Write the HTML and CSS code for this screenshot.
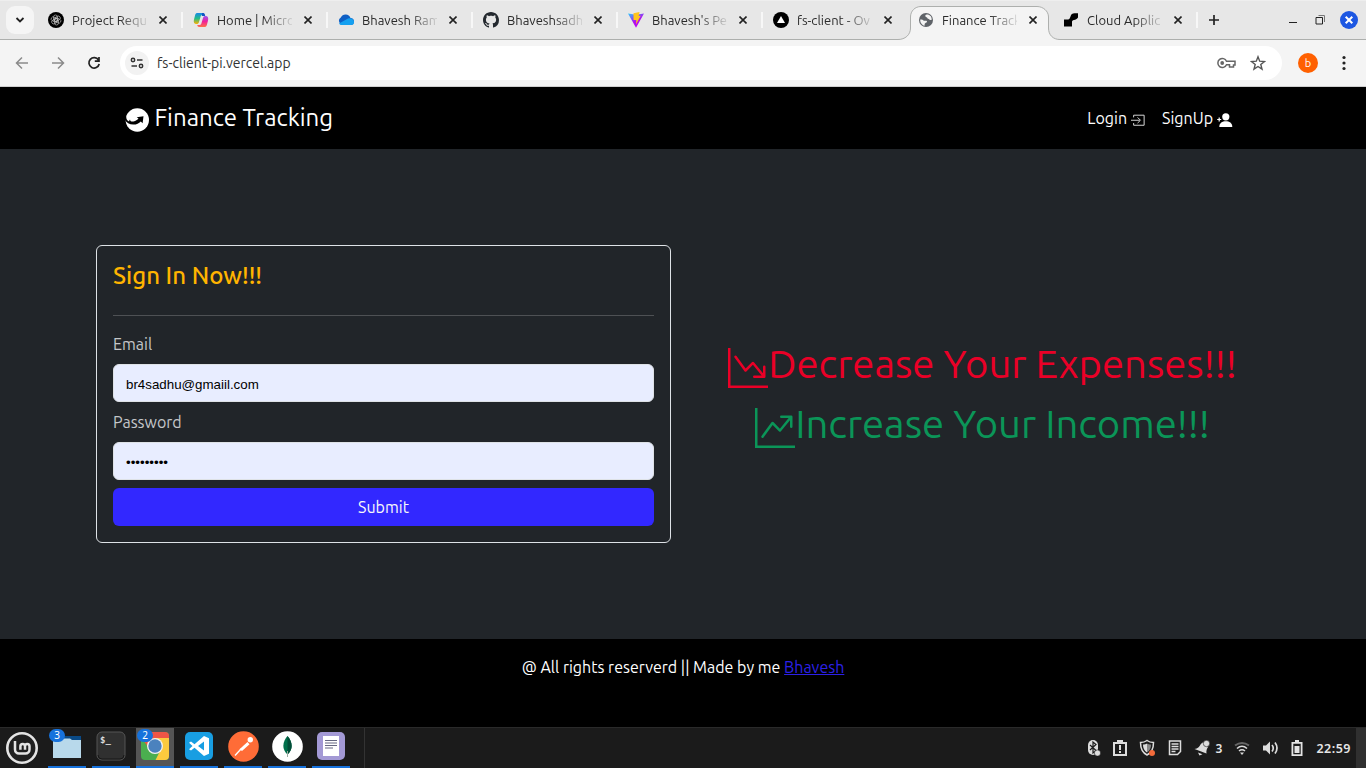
FILE: index.html
```html
<!DOCTYPE html>
<html lang="en">
<head>
<meta charset="utf-8">
<title>Finance Tracking</title>
<link rel="stylesheet" href="styles.css">
</head>
<body>
<div class="screen">
  <div class="tabstrip">
    <button class="tab-search"><svg width="10" height="10" viewBox="0 0 10 10"><path d="M1.500 3l3.500 3.500L8.500 3" fill="none" stroke="#222" stroke-width="1.800"/></svg></button>
    <div class="tabs">
      <div class="tab">
        <svg class="fav" viewBox="0 0 16 16"><circle cx="8" cy="8" r="8" fill="#000"/><g fill="none" stroke="#ccc" stroke-width=".6"><rect x="5.500" y="3" width="4" height="6.500" rx="2"/><rect x="5.500" y="3" width="4" height="6.500" rx="2" transform="rotate(60 8 8)"/><rect x="5.500" y="3" width="4" height="6.500" rx="2" transform="rotate(120 8 8)"/><rect x="5.500" y="3" width="4" height="6.500" rx="2" transform="rotate(180 8 8)"/><rect x="5.500" y="3" width="4" height="6.500" rx="2" transform="rotate(240 8 8)"/><rect x="5.500" y="3" width="4" height="6.500" rx="2" transform="rotate(300 8 8)"/></g></svg>
        <span class="tab-title">Project Requ</span><svg class="x" viewBox="0 0 8 8"><path d="M.5.5l7 7m0-7l-7 7"/></svg>
      </div>
      <div class="tab">
        <svg class="fav" viewBox="0 0 16 16"><defs><linearGradient id="ca" x1="0" y1="0" x2="0" y2="1"><stop offset="0" stop-color="#1788e8"/><stop offset=".5" stop-color="#25bd86"/><stop offset="1" stop-color="#ffb000"/></linearGradient><linearGradient id="cb" x1="0" y1="0" x2="0" y2="1"><stop offset="0" stop-color="#9b55f0"/><stop offset=".5" stop-color="#f0209a"/><stop offset="1" stop-color="#ff7048"/></linearGradient></defs><path d="M4 1h6c1 0 1.500 1 1.800 2H9.500C8 3 7.700 4 7.200 6L6 10c-.5 1.500-1 2-2.500 2C1 12 .3 10 1 7.500l1-4C2.400 2 2.900 1 4 1z" fill="url(#ca)"/><path d="M12 15H6c-1 0-1.500-1-1.800-2h2.300C8 13 8.300 12 8.800 10L10 6c.5-1.500 1-2 2.500-2C15 4 15.700 6 15 8.500l-1 4c-.4 1.500-.9 2.500-2 2.500z" fill="url(#cb)"/><path d="M9 1h1.500c.8 0 1.500 1.500 1.700 3L9 4z" fill="#1455c4"/></svg>
        <span class="tab-title">Home | Micro</span><svg class="x" viewBox="0 0 8 8"><path d="M.5.5l7 7m0-7l-7 7"/></svg>
      </div>
      <div class="tab">
        <svg class="fav" viewBox="0 0 16 16"><path d="M3.500 12A3.500 3.500 0 0 1 2.800 5.500 5.300 5.300 0 0 1 12.500 6 3.200 3.200 0 0 1 12.500 13H4z" fill="#0f5fc5"/><path d="M1 11.500L10 6.600c3-1.300 6 .6 6 3.300A3.100 3.100 0 0 1 13 13H3.500C2.200 13 1.400 12.300 1 11.500z" fill="#14a0f0"/></svg>
        <span class="tab-title">Bhavesh Ram</span><svg class="x" viewBox="0 0 8 8"><path d="M.5.5l7 7m0-7l-7 7"/></svg>
      </div>
      <div class="tab">
        <svg class="fav" viewBox="0 0 16 16"><path fill="#24292f" d="M8 0C3.580 0 0 3.580 0 8c0 3.540 2.290 6.530 5.470 7.590.4.070.55-.17.55-.38 0-.19-.01-.82-.01-1.490-2.010.37-2.530-.49-2.690-.94-.09-.23-.48-.94-.82-1.130-.28-.15-.68-.52-.01-.53.63-.01 1.080.58 1.230.82.72 1.210 1.870.87 2.330.66.070-.52.280-.87.51-1.070-1.780-.2-3.640-.89-3.640-3.950 0-.87.31-1.590.82-2.150-.08-.2-.36-1.020.08-2.120 0 0 .67-.21 2.200.82.64-.18 1.320-.27 2-.27s1.360.09 2 .27c1.530-1.040 2.200-.82 2.200-.82.44 1.100.16 1.920.08 2.120.51.56.82 1.270.82 2.150 0 3.070-1.870 3.750-3.650 3.950.29.25.54.73.54 1.480 0 1.070-.01 1.930-.01 2.200 0 .21.15.46.55.38A8.010 8.010 0 0 0 16 8c0-4.420-3.580-8-8-8z"/></svg>
        <span class="tab-title">Bhaveshsadh</span><svg class="x" viewBox="0 0 8 8"><path d="M.5.5l7 7m0-7l-7 7"/></svg>
      </div>
      <div class="tab">
        <svg class="fav" viewBox="0 0 16 16"><defs><linearGradient id="v" x1="0" y1="0" x2=".6" y2="1"><stop offset="0" stop-color="#28ceff"/><stop offset=".6" stop-color="#b010f0"/><stop offset="1" stop-color="#c000f0"/></linearGradient></defs><path d="M0 1.500l8 1.300 8-1.300-8 14.300z" fill="url(#v)"/><path d="M5.500 1.200L11.500 0l-.8 4 2-.3L8 12.500l.3-4.500H5.500z" fill="#ffc51d"/></svg>
        <span class="tab-title">Bhavesh's Pe</span><svg class="x" viewBox="0 0 8 8"><path d="M.5.5l7 7m0-7l-7 7"/></svg>
      </div>
      <div class="tab">
        <svg class="fav" viewBox="0 0 16 16"><circle cx="8" cy="8" r="8"/><path d="M8 4l4 7H4z" fill="#fff"/></svg>
        <span class="tab-title">fs-client - Ov</span><svg class="x" viewBox="0 0 8 8"><path d="M.5.5l7 7m0-7l-7 7"/></svg>
      </div>
      <div class="tab active">
        <svg class="shape" width="162" height="34" viewBox="0 0 162 34"><path d="M0 34V33.500C7 33.500 12.500 29 12.500 22V11C12.500 5 17 .5 23 .5h116c6 0 11.500 4.500 11.500 10.500v11c0 7 4.500 11.500 11.500 11.500v.5z" fill="#f4f4f4"/><path d="M0 33.500C7 33.500 12.500 29 12.500 22V11C12.500 5 17 .5 23 .5h116c6 0 11.500 4.500 11.500 10.500v11c0 7 4.500 11.500 11.500 11.500" fill="none" stroke="#adafad"/></svg>
        <svg class="fav" viewBox="0 0 16 16"><circle cx="8" cy="8" r="7" fill="#5f6368"/><path d="M9 2.500c-2 0-1.800 1.300-1.500 2 .4.800 1.700.5 1.800 1.600.1 1 1.500.5 2 1.400.3.600 1.500.6 2.400.2C14 5 12 2.500 9 2.500zM2.200 7.500c1.800 0 3.300.5 3.500 1.300h2.600c1 .3.800 1.200.2 1.800-1 .4-1.800.7-1.900 2v1.100C4 13.300 2 10.500 2.200 7.500z" fill="#f4f4f4"/></svg>
        <span class="tab-title">Finance Track</span><svg class="x" viewBox="0 0 8 8"><path d="M.5.5l7 7m0-7l-7 7"/></svg>
      </div>
      <div class="tab">
        <svg class="fav" viewBox="0 0 16 16"><path d="M1 7.500h4C6.500 7.500 7 6 7.500 4.500 8 2.500 9.500 1.300 11.500 1.300h3.500v4.200c-1 1.800-2.500 2.200-4 2.500-1.500.3-2 .8-2 2v4.500H1z"/></svg>
        <span class="tab-title">Cloud Applic</span><svg class="x" viewBox="0 0 8 8"><path d="M.5.5l7 7m0-7l-7 7"/></svg>
      </div>
    </div>
    <svg class="plus" width="12" height="12" viewBox="0 0 12 12"><path d="M6 1v10M1 6h10" stroke="#222" stroke-width="1.700"/></svg>
    <div class="window-buttons">
      <svg width="9" height="18" viewBox="0 0 9 18"><path d="M0 11.500h8" stroke="#222"/></svg>
      <svg width="11" height="18" viewBox="0 0 11 18"><path d="M3.500 4.500h6V11" fill="none" stroke="#777"/><path d="M1 6.500h6.500V13H1z" fill="none" stroke="#222"/></svg>
      <svg width="18" height="18" viewBox="0 0 18 18"><circle cx="9" cy="9" r="9" fill="#1d57e2"/><path d="M5.700 5.700l6.600 6.600m0-6.600l-6.600 6.600" stroke="#fff" stroke-width="2"/></svg>
    </div>
  </div>

  <div class="toolbar">
    <div class="nav-buttons">
      <svg width="14" height="14" viewBox="0 0 14 14"><path d="M7 1.500L1.500 7 7 12.500M1.500 7H13" class="line muted"/></svg>
      <svg width="14" height="14" viewBox="0 0 14 14"><path d="M7 1.500L12.500 7 7 12.500M12.500 7H1" class="line muted"/></svg>
      <svg width="14" height="14" viewBox="0 0 14 14"><path d="M11.500 4A5.200 5.200 0 1 0 12.200 8M12 1v4.200H7.800" fill="none" stroke="#222" stroke-width="1.700"/></svg>
    </div>
    <div class="omnibox">
      <span class="site-info"><svg width="14" height="12" viewBox="0 0 14 12"><g fill="none" stroke="#333" stroke-width="1.500"><circle cx="3" cy="3" r="1.700"/><path d="M7 3h5.500M1.500 9H7"/><circle cx="11" cy="9" r="1.700"/></g></svg></span>
      <span class="url">fs-client-pi.vercel.app</span>
      <svg class="key" width="19" height="12" viewBox="0 0 19 12"><path d="M9.500 4.200A4.500 4.500 0 1 0 9.500 7.800H12.500V10h4V8h1.500V4.200z" fill="none" stroke="#666" stroke-width="1.500"/><circle cx="5.200" cy="6" r="1.900" fill="#666"/></svg>
      <svg width="16" height="16" viewBox="0 0 16 16"><path d="M8 1.800l1.700 4.400 4.800.3-3.700 3 1.200 4.600L8 11.500l-4 2.600 1.200-4.600-3.700-3 4.800-.3z" fill="none" stroke="#555" stroke-width="1.400"/></svg>
    </div>
    <span class="profile">b</span>
    <svg width="4" height="16" viewBox="0 0 4 16"><g fill="#222"><circle cx="2" cy="2.500" r="1.600"/><circle cx="2" cy="8" r="1.600"/><circle cx="2" cy="13.500" r="1.600"/></g></svg>
  </div>

  <header class="site-header">
    <div class="brand">
      <svg width="24" height="24" viewBox="0 0 24 24"><circle cx="12.300" cy="12" r="11.700" fill="#fff"/><path d="M0 8.500h1.200c0 2.500 1 4.300 2.900 4.900 0-.8.300-1.500.9-2 .2 1.700 1.500 2.400 3.400 2.100 2.400-.4 3.900-1.600 5.100-3l-1.800-1.300 6.800-.9-.9 7-1.800-1.900c-1.900 2-4.200 3.100-7.300 3.200C4.500 16.700 1.500 14.800 0 12z" fill="#000"/></svg>
      <span>Finance Tracking</span>
    </div>
    <nav class="site-nav">
      <a>Login <svg width="14" height="14" viewBox="0 0 16 16"><path d="M3 5V2.500h12v11.500H3V11.500M0 8.300h10M7.500 5l3.300 3.300L7.500 11.500" fill="none" stroke="#ddd" stroke-width="1.100"/></svg></a>
      <a>SignUp <svg width="16" height="16" viewBox="0 0 16 16"><circle cx="8.800" cy="4.800" r="3.600" fill="#fff"/><path d="M2.300 15c0-4 3-5.700 6.500-5.700s6.500 1.700 6.500 5.700z" fill="#fff"/><path d="M2.200 5.500v4M.2 7.500h4" stroke="#fff" stroke-width="1.200"/></svg></a>
    </nav>
  </header>

  <main class="content">
    <form class="card">
      <h1>Sign In Now!!!</h1>
      <hr>
      <label for="email">Email</label>
      <input id="email" type="text" value="br4sadhu@gmaiil.com">
      <label for="password">Password</label>
      <input id="password" type="password" value="abcdefghi">
      <button class="submit" type="button">Submit</button>
    </form>
    <section class="slogans">
      <div class="slogan down"><svg width="40" height="40" viewBox="0 0 16 16"><path fill="currentColor" fill-rule="evenodd" d="M0 0h1v15h15v1H0V0Zm10 11.500a.5.5 0 0 0 .5.5h4a.5.5 0 0 0 .5-.5v-4a.5.5 0 0 0-1 0v2.600l-3.613-4.417a.5.5 0 0 0-.74-.037L7.060 8.233 3.404 3.206a.5.5 0 0 0-.808.588l4 5.500a.5.5 0 0 0 .758.060l2.609-2.610L13.445 11H10.500a.5.5 0 0 0-.5.5Z"/></svg><span>Decrease Your Expenses!!!</span></div>
      <div class="slogan up"><svg width="40" height="40" viewBox="0 0 16 16"><path fill="currentColor" fill-rule="evenodd" d="M0 0h1v15h15v1H0V0Zm10 3.500a.5.5 0 0 1 .5-.5h4a.5.5 0 0 1 .5.5v4a.5.5 0 0 1-1 0V4.900l-3.613 4.417a.5.5 0 0 1-.74.037L7.060 6.767l-3.656 5.027a.5.5 0 0 1-.808-.588l4-5.500a.5.5 0 0 1 .758-.060l2.609 2.610L13.445 4H10.500a.5.5 0 0 1-.5-.5Z"/></svg><span>Increase Your Income!!!</span></div>
    </section>
  </main>

  <footer class="site-footer"><p>@ All rights reserverd || Made by me <a>Bhavesh</a></p></footer>

  <div class="taskbar">
    <div class="start"><svg width="32" height="32" viewBox="0 0 32 32"><circle cx="16" cy="16" r="14.700" fill="#202020" stroke="#e4e4e4" stroke-width="2.600"/><path d="M9 9v8.500a4 4 0 0 0 4 4h6.500a4 4 0 0 0 4-4v-3.300a2.200 2.200 0 0 0-4.500 0v3.600-3.600a2.300 2.300 0 0 0-4.600 0v3.600" fill="none" stroke="#e4e4e4" stroke-width="2.500"/></svg></div>
    <div class="apps">
      <div class="app"><svg width="30" height="30" viewBox="0 0 30 30"><path d="M1 5h28v6H1z" fill="#0a4a86"/><path d="M1 7.500h17l2 1.500h9V27H1z" fill="#b8d9eb"/></svg><b class="badge">3</b></div>
      <div class="app"><svg width="30" height="30" viewBox="0 0 30 30"><rect x="1" y="1" width="28" height="28" rx="5" fill="#303030" stroke="#555"/><path d="M2 24q0 4 4 4h18q4 0 4-4" fill="none" stroke="#171717"/></svg><span class="prompt">$_</span></div>
      <div class="app current"><svg width="30" height="30" viewBox="0 0 30 30"><defs><clipPath id="cr"><rect x="1" y="1" width="28" height="28" rx="4"/></clipPath></defs><g clip-path="url(#cr)"><path d="M0 0h30v30H0z" fill="#4bae4f"/><path d="M0 0h30v7H15L8 16 1 6z" fill="#ee5546"/><path d="M15 7h15v23H15l7-14z" fill="#fcca3e"/></g><circle cx="15" cy="15" r="8" fill="#f2f2f2"/><circle cx="15" cy="15" r="6.700" fill="#4b82be"/></svg><b class="badge">2</b></div>
      <div class="app"><svg width="30" height="30" viewBox="0 0 30 30"><rect x="1" y="1" width="28" height="28" rx="5" fill="#189ee2"/><path d="M20 5l5 2.300v15.400L20 25 10.500 16.800 7 19.500 5 18.300 8.500 15 5 11.700 7 10.500l3.500 2.700zM20 10.500L14 15l6 4.500z" fill="#fff" fill-rule="evenodd"/></svg></div>
      <div class="app"><svg width="31" height="31" viewBox="0 0 31 31"><circle cx="15.500" cy="15.500" r="15.300" fill="#ff6c37"/><circle cx="22.300" cy="8.700" r="2.700" fill="#fff"/><path d="M19.500 11l2 2.200-7.500 6.800-2.500-1.800z" fill="#fff"/><path d="M13 18l-6 6.500" fill="none" stroke="#fff" stroke-width="1.400"/></svg></div>
      <div class="app"><svg width="31" height="31" viewBox="0 0 31 31"><circle cx="15.500" cy="15.500" r="15.300" fill="#fff"/><path d="M15.500 5c5.300 6 5.800 13.500 0 18.500-5.800-5-5.300-12.500 0-18.500z" fill="#00704b"/><path d="M15.500 5c5.300 6 5.800 13.500 0 18.500z" fill="#024d38"/><path d="M15.500 20v6" stroke="#9caaa0"/></svg></div>
      <div class="app"><svg width="30" height="30" viewBox="0 0 30 30"><rect x="1" y="1" width="28" height="28" rx="5" fill="#a399d5"/><path d="M7 5h16v20H7z" fill="#fff"/><path d="M9 9.500h12M9 12h12M9 14.500h12M9 17h8" stroke="#666982"/></svg></div>
    </div>
    <div class="tray">
      <svg width="14" height="18" viewBox="0 0 14 18"><rect x="1" y="1" width="10" height="15" rx="5" fill="#ddd"/><path d="M3 6l6 5.500L6 14V3l3 2.500L3 11" fill="none" stroke="#1b1b1b" stroke-width="1.200"/><circle cx="10.500" cy="14" r="3.100" fill="#ddd" stroke="#1b1b1b" stroke-width=".6"/></svg>
      <svg width="14" height="18" viewBox="0 0 14 18"><path d="M1 4h12v12H1z" fill="none" stroke="#ddd" stroke-width="2"/><path d="M4 1h6v3H4zM6 6h2v5H6zm0 6h2v2H6z" fill="#ddd"/></svg>
      <svg width="17" height="18" viewBox="0 0 17 18"><path d="M8 1.500c2 1.500 4 2 6.500 2 0 6-1.500 10-6.500 12.500C3 13.500 1.500 9.500 1.500 3.500 4 3.500 6 3 8 1.500z" fill="none" stroke="#ddd" stroke-width="1.500"/><path d="M8 4.500v9C5 11.500 4 9 4 5.500c1.500 0 3-.3 4-1z" fill="#ddd"/><path d="M8 4.500v9c3-2 4-4.500 4-8-1.500 0-3-.3-4-1z" fill="#888"/><circle cx="13" cy="14" r="3" fill="#f36b3b"/></svg>
      <svg width="14" height="18" viewBox="0 0 14 18"><path d="M1.500 2h11v10.500L9.500 15.500h-8z" fill="none" stroke="#ddd" stroke-width="1.500"/><path d="M3.500 5h7M3.500 7.500h7M3.500 10h7M3.500 12.500h4" stroke="#ddd" stroke-width="1.300"/></svg>
      <span class="bell"><svg width="16" height="18" viewBox="0 0 16 18"><path d="M.5 10c3.500-.3 4.500-2 6-4.500C7.800 3.300 10 3 11.500 4l2.500 4c-1 1.500-2 3.500-1.500 6.500zM4 13.500l4.500 1.800-3 1.200z" fill="#ddd"/><circle cx="12.500" cy="4.500" r="3.200" fill="#ddd" stroke="#1b1b1b" stroke-width=".6"/></svg><span>3</span></span>
      <svg width="16" height="18" viewBox="0 0 16 18"><path d="M1 6.500q7-5 14 0" fill="none" stroke="#666" stroke-width="2"/><path d="M3 9.500q5-4.500 10 0M5 12q3-2.500 6 0" fill="none" stroke="#ddd" stroke-width="1.600"/><path d="M6 13.500h4l-2 2.500z" fill="#ddd"/></svg>
      <svg width="17" height="18" viewBox="0 0 17 18"><path d="M1 6.500h3L8 2.500v13l-4-4H1z" fill="#ddd"/><path d="M10 6q2.500 3 0 6.500M13 3.500q4 5.500 0 11" fill="none" stroke="#ddd" stroke-width="1.700"/></svg>
      <svg width="12" height="18" viewBox="0 0 12 18"><path d="M4 1h4v2h3.500v14H.5V3H4zM2.300 4.800v10.400h7.400V4.800z" fill="#e4e4e4" fill-rule="evenodd"/><path d="M3.500 7h5v7h-5z" fill="#e4e4e4"/></svg>
      <span class="clock">22:59</span>
    </div>
    <div class="show-desktop"></div>
  </div>
</div>
</body>
</html>
```
FILE: styles.css
```css
* { box-sizing: border-box; }
body { margin: 0; font-family: Ubuntu, "Open Sans", "Noto Sans", sans-serif; overflow: hidden; }
svg { display: block; flex: none; }
button { border: 0; padding: 0; font: inherit; }
.screen { width: 1366px; height: 768px; display: flex; flex-direction: column; }

/* Browser tabs */
.tabstrip { height: 40px; flex: none; display: flex; align-items: center; background: #e7e7e7; border-top: 1px solid #eee; border-bottom: 1px solid #adafad; padding-left: 6px; }
.tab-search { width: 28px; height: 28px; border-radius: 9px; background: #f5f5f5; display: grid; place-items: center; }
.tabs { display: flex; margin-left: 3px; }
.tab { position: relative; width: 145px; height: 28px; display: flex; align-items: center; padding-left: 11px; }
.tab::after { content: ""; position: absolute; right: -1px; top: 6px; width: 2px; height: 16px; background: #f7f7f7; }
.tab.active::after, .tab:nth-child(6)::after { display: none; }
.fav { width: 16px; height: 16px; position: relative; }
.tab-title { position: relative; width: 75px; margin-left: 8px; white-space: nowrap; font-size: 13px; color: #2b2b2b; mask-image: linear-gradient(to right, #000 62%, transparent 105%); }
.x { width: 8px; height: 8px; margin-left: 12px; position: relative; }
.x path { stroke: #222; stroke-width: 1.6; }
.shape { position: absolute; left: -9px; top: 0; }
.plus { margin-left: 11px; }
.window-buttons { margin-left: auto; margin-right: 8px; display: flex; gap: 17px; align-items: center; }
.window-buttons svg:last-child { margin-left: -3px; }

/* Address bar */
.toolbar { height: 47px; flex: none; display: flex; align-items: center; background: #f4f4f4; border-bottom: 1px solid #cfcfcf; padding: 0 20px 0 15px; }
.nav-buttons { display: flex; gap: 22px; }
.line { fill: none; stroke-width: 1.5; }
.muted { stroke: #8b8b8b; }
.omnibox { width: 1162px; height: 34px; margin-left: 19px; border-radius: 17px; background: #fff; display: flex; align-items: center; padding: 0 16px 0 5px; }
.site-info { width: 24px; height: 24px; border-radius: 50%; background: #f2f2f2; display: grid; place-items: center; }
.url { margin-left: 8px; font-size: 14px; color: #333; }
.key { margin-left: auto; margin-right: 14px; }
.profile { width: 20px; height: 20px; margin: 0 24px 0 16px; border-radius: 50%; background: #ff6000; color: #fff; font-size: 11px; line-height: 20px; text-align: center; }

/* Site header */
.site-header { height: 62px; flex: none; display: flex; justify-content: space-between; align-items: center; background: #000; color: #fff; padding: 0 133px 0 125px; }
.brand { display: flex; align-items: center; gap: 5.500px; font-size: 24px; }
.brand svg { margin-top: 4px; }
.brand span { line-height: 36px; }
.site-nav { display: flex; gap: 17px; font-size: 16px; }
.site-nav a { display: flex; align-items: center; gap: 4px; line-height: 24px; }
.site-nav svg { margin-top: 3px; }

/* Main area */
.content { height: 490px; flex: none; display: flex; align-items: center; background: #212529; padding: 0 96px; }
.card { width: 575px; height: 298px; border: 1px solid #dee2e6; border-radius: 6px; padding: 15px 16px 16px; display: flex; flex-direction: column; }
.card h1 { margin: 0 0 25px; font-size: 24px; line-height: 29px; font-weight: 500; color: #ffb400; }
.card hr { width: 100%; margin: 0 0 16px; border: 0; border-top: 1px solid #4e5154; }
.card label { font-size: 16px; line-height: 24px; margin-bottom: 8px; color: #c5c7c9; }
.card input { height: 38px; flex: none; margin-bottom: 8px; border: 1px solid #dee2e6; border-radius: 6px; background: #e8edff; padding: 3px 12px 0; font: 13.333px "Liberation Sans", Arial, sans-serif; color: #000; }
.submit { height: 38px; flex: none; border-radius: 6px; background: #3228ff; color: #f8f9fa; font-size: 16px; }
.slogans { flex: 1; display: flex; flex-direction: column; align-items: center; gap: 12px; padding-left: 24px; }
.slogan { display: flex; align-items: center; height: 48px; font-size: 40px; line-height: 48px; font-weight: 400; white-space: nowrap; }
.slogan svg { margin-top: 8px; }
.down { color: #ea0027; }
.up { color: #0b9558; }

/* Site footer */
.site-footer { height: 88px; flex: none; background: #000; color: #fff; text-align: center; }
.site-footer p { margin: 16px 0 0; font-size: 16px; line-height: 24px; }
.site-footer a { color: #2c20e8; text-decoration: underline; }

/* Desktop panel */
.taskbar { height: 41px; flex: none; display: flex; background: #1b1b1b; border-top: 1px solid #2a2a2a; color: #e5e5e5; }
.start { width: 48px; padding: 4px 0 0 6px; }
.apps { display: flex; gap: 6px; padding-right: 14px; border-right: 1px solid #333; }
.app { position: relative; width: 38px; display: flex; justify-content: center; align-items: center; padding-bottom: 2px; border-bottom: 2px solid #1672dc; }
.current { background: #555; }
.badge { position: absolute; left: 1px; top: 1px; width: 16px; height: 13px; border-radius: 7px; background: #1672dc; color: #fff; font: 10px/13px "Noto Sans", sans-serif; text-align: center; }
.prompt { position: absolute; left: 8px; top: 6px; font: bold 9px/12px "DejaVu Sans Mono", monospace; color: #ddd; }
.tray { margin-left: auto; display: flex; align-items: center; gap: 12px; margin-right: 5px; }
.bell { display: flex; align-items: center; gap: 6px; font: 600 12px "Noto Sans", sans-serif; }
.clock { font: 600 12.5px "Noto Sans", sans-serif; letter-spacing: 0.5px; margin-left: 1px; }
.show-desktop { width: 10px; background: #303030; }
```
